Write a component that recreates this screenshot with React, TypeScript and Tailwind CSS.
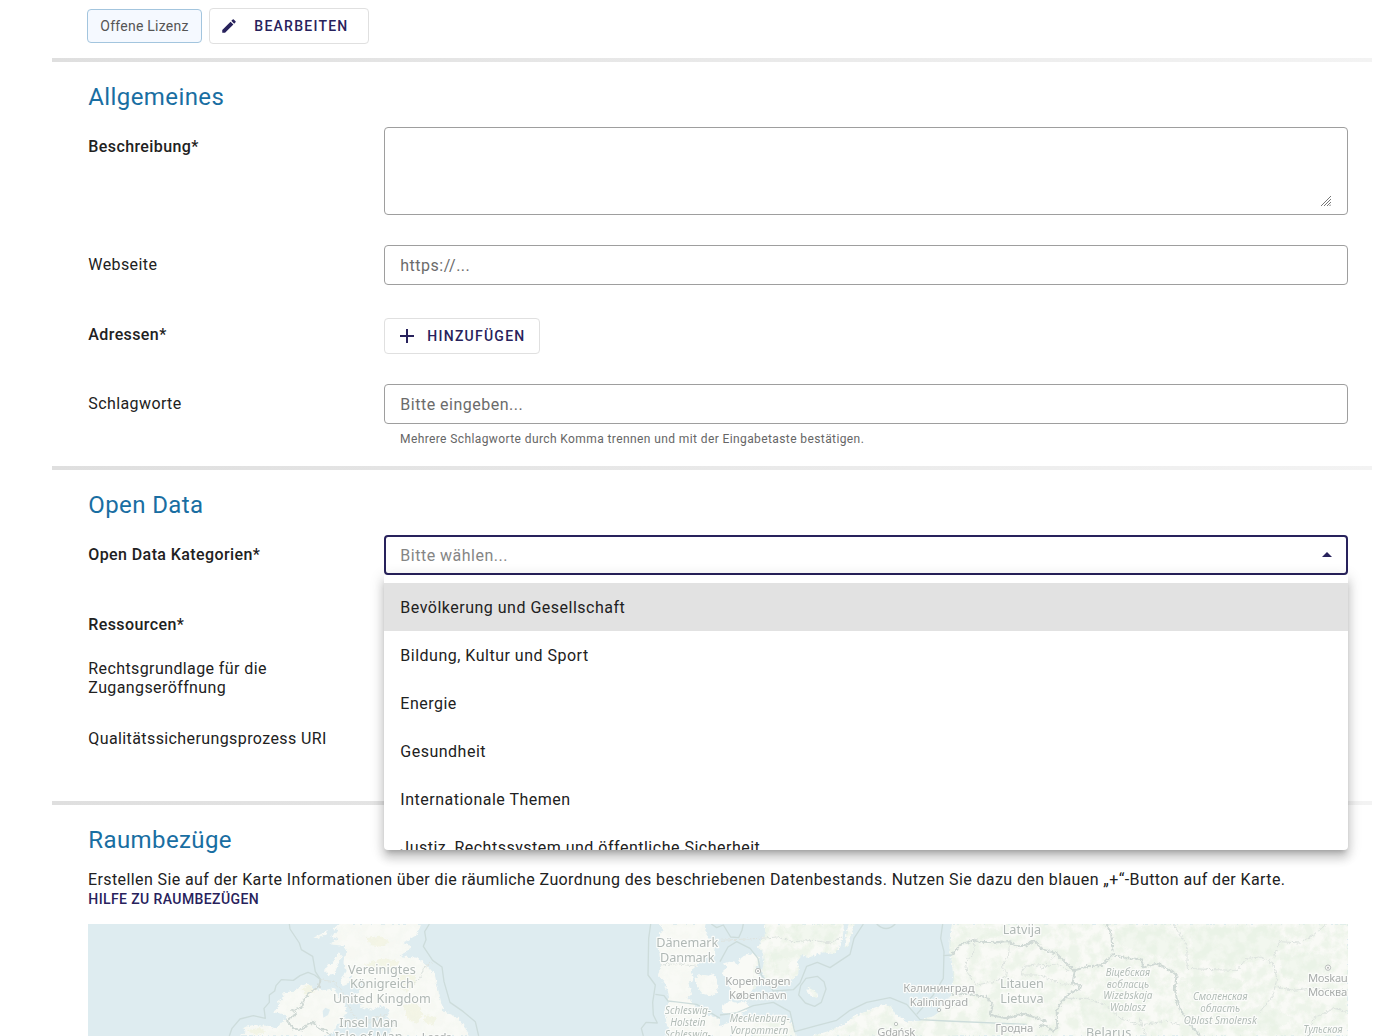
import React from "react";

const LAND = [
  // Scotland and England
  "M776 27 L760 42 L778 46 L750 66 L776 70 L748 88 L790 92 L800 104 L790 140 L800 168 L782 196 L788 214 L806 206 L812 178 L826 206 L850 196 L858 208 L838 226 L828 248 L850 262 L838 278 L880 284 L900 272 L930 284 L922 306 L936 330 L928 363 L1166 363 L1152 330 L1130 306 L1090 288 L1078 240 L1064 178 L1040 150 L1010 128 L960 124 L996 96 L970 84 L1010 60 L1024 27 Z",
  "M776 112 L786 122 L774 146 L764 178 L744 178 L732 166 L744 148 L758 146 Z",
  "M700 68 L722 58 L740 48 L738 58 L716 70 Z",
  // Ireland
  "M480 363 L500 346 L486 338 L520 330 L560 332 L590 340 L606 322 L624 304 L606 296 L578 292 L598 276 L594 260 L612 246 L606 236 L640 228 L662 212 L684 206 L700 222 L730 226 L762 220 L778 250 L796 270 L800 290 L784 322 L770 330 L764 350 L740 363 Z",
  // Jutland
  "M1738 27 L1750 42 L1740 56 L1736 96 L1742 150 L1734 180 L1752 200 L1766 238 L1764 262 L1754 284 L1760 330 L1780 363 L1920 363 L1920 310 L1880 300 L1850 284 L1838 262 L1822 250 L1836 236 L1826 210 L1838 190 L1832 168 L1852 150 L1870 120 L1900 134 L1904 100 L1896 80 L1880 60 L1874 40 L1878 27 Z",
  "M1846 188 L1860 178 L1884 182 L1902 176 L1912 196 L1912 230 L1896 244 L1868 236 L1852 216 Z",
  // Zealand and islands
  "M1936 190 L1926 170 L1940 158 L1930 146 L1956 138 L1974 150 L1984 126 L2010 116 L2034 124 L2040 142 L2026 160 L2038 184 L2026 220 L2004 236 L1990 254 L1964 244 L1950 222 Z",
  "M1926 270 L1950 258 L1974 264 L1998 258 L2008 276 L1990 290 L1980 316 L1960 296 L1930 294 Z",
  // Scania
  "M2054 27 L2056 56 L2046 72 L2034 98 L2048 110 L2052 140 L2046 168 L2060 200 L2088 206 L2124 204 L2154 180 L2156 160 L2150 142 L2168 118 L2184 128 L2230 112 L2262 118 L2276 100 L2288 70 L2292 27 Z",
  "M2306 27 L2324 27 L2316 58 L2304 94 L2294 100 L2298 60 Z",
  "M2184 214 L2208 230 L2212 248 L2194 244 L2182 234 Z",
  // German coast
  "M1920 363 L1920 334 L1960 318 L2010 322 L2054 306 L2100 300 L2126 318 L2142 334 L2150 363 Z",
  // Poland, the Baltics and the east
  "M2194 363 L2240 350 L2290 330 L2312 310 L2360 288 L2408 270 L2432 272 L2446 296 L2480 320 L2520 318 L2550 304 L2574 278 L2604 262 L2616 230 L2620 190 L2616 140 L2608 110 L2610 60 L2616 27 L3804 27 L3804 363 Z",
];

const FOREST = [
  "M2110 40 L2160 30 L2284 32 L2270 90 L2220 70 L2150 84 Z",
  "M2070 110 L2130 130 L2124 180 L2090 160 Z",
  "M2640 36 L2740 40 L2780 60 L2720 74 L2660 66 Z",
  "M3100 40 L3220 32 L3300 70 L3290 130 L3200 120 L3120 90 Z",
  "M3330 40 L3560 34 L3640 80 L3560 130 L3460 150 L3340 130 Z",
  "M3300 190 L3420 180 L3500 200 L3470 226 L3350 220 Z",
  "M3000 260 L3100 250 L3160 300 L3100 340 L3010 330 Z",
  "M3600 130 L3700 110 L3760 140 L3700 200 L3610 190 Z",
  "M2690 280 L2760 260 L2800 300 L2760 340 L2700 330 Z",
  "M3460 290 L3560 270 L3640 310 L3580 350 L3470 345 Z",
];

const FARMLAND = [
  "M860 70 L900 62 L930 80 L910 96 L870 90 Z",
  "M850 150 L910 128 L960 140 L940 170 L880 168 Z",
  "M960 180 L1000 170 L1010 200 L980 230 L950 214 Z",
  "M970 270 L1010 262 L1030 300 L1010 326 L980 310 Z",
  "M664 222 L690 210 L704 230 L680 244 Z",
  "M500 346 L540 338 L560 352 L530 360 Z",
  "M1036 300 L1070 306 L1060 330 L1030 320 Z",
];

const SEA_BORDERS = [
  "M628 27 L630 42 L658 84 L664 104 L698 124 L706 170 L722 194 L704 180 L684 172 L660 182 L640 196 L604 194 L588 212 L584 228 L568 240 L568 262 L552 280 L556 310 L520 302 L480 312 L456 340 L448 363",
  "M1048 27 L1034 50 L1038 74 L1030 94 L1058 136 L1086 156 L1092 200 L1110 262 L1150 290 L1186 320 L1196 363",
  "M1712 27 L1706 70 L1704 180 L1726 210 L1718 262 L1720 300 L1732 324 L1698 322 L1684 340 L1690 363",
  "M1726 238 L1752 242 L1764 258 L1850 268 L1890 292 L1920 310",
  "M1894 27 L1910 38 L1930 30 L1952 66 L1976 68 L1986 46 L1990 27",
  "M1920 140 L1944 96 L1970 80 L2010 100 L2034 130 L2044 180 L2080 228 L2140 224 L2160 204 L2180 154 L2212 142 L2250 158 L2310 118 L2322 70 L2350 27",
  "M2178 190 L2212 184 L2232 200 L2238 222 L2224 262 L2204 274 L2176 264 L2156 240 L2162 212 Z",
  "M1920 300 L1968 294 L2020 272 L2080 262 L2130 290 L2144 350 L2210 332 L2270 316 L2310 286 L2360 262 L2430 248 L2480 268 L2520 314 L2600 318 L2840 328",
  "M2390 27 Q2418 54 2446 27",
  "M2588 27 L2582 70 L2592 110 L2590 190 L2560 240 L2510 298",
  "M2590 122 L2616 120",
];

const LAND_BORDERS = [
  "M722 194 L716 216 L684 236 L668 262 L664 278 L636 288 L650 296 L620 316 L640 340 L664 346 L680 330 L700 320 L716 340 L736 345 L752 363",
  "M2616 120 L2640 90 L2684 74 L2700 80 L2750 82 L2786 78 L2810 94 L2834 92 L2862 78 L2890 104 L2930 116 L2964 150 L2984 166 L3026 154 L3066 150 L3100 118 L3140 130 L3184 132 L3190 158 L3230 146 L3260 160 L3290 180 L3284 220 L3292 262 L3304 290 L3340 340 L3360 363",
  "M3080 27 L3094 60 L3098 110",
  "M2984 166 L2978 204 L3004 210 L3000 222 L2974 232 L2944 260 L2930 290 L2932 340 L2918 348 L2902 334 L2880 330",
  "M2616 240 L2660 236 L2720 246 L2738 270 L2732 300 L2780 310 L2830 296 L2900 320",
];

const REGION_BORDERS = [
  "M1920 76 L2040 70 L2090 66 L2140 80 L2200 76 L2250 84 L2286 66",
  "M1740 150 L1790 146 L1850 154",
  "M2684 80 L2680 120 L2656 140 L2660 170 L2690 210 L2740 200 L2780 184 L2782 170 L2764 160 L2786 120 L2788 84",
  "M2926 122 L2896 148 L2830 154 L2824 180 L2880 180 L2940 206 L3000 210",
  "M3280 27 L3300 60 L3320 90 L3322 160 L3400 164 L3470 166 L3500 130 L3540 126 L3580 144 L3590 190 L3580 240 L3540 290",
  "M3580 130 L3600 80 L3660 84 L3700 60 L3740 27",
  "M3590 216 L3640 226 L3690 220 L3804 226",
  "M2880 160 L2930 146 L2970 170",
  "M2960 250 L3020 250 L3080 270 L3120 310 L3180 330 L3260 318 L3300 330",
  "M3200 363 L3184 330 L3180 310",
  "M3680 363 L3700 310 L3760 280 L3804 290",
  "M722 194 L760 200 L786 226 L800 262 L820 300 L850 330 L880 306 L920 302",
  "M850 334 L900 300 L950 332",
  "M1056 140 L1030 160 L1020 190 L1000 206",
];

type Label = { t: string; x: number; y: number; w: number; s: number; italic?: boolean; dark?: boolean };

const LABELS: Label[] = [
  { t: "Vereinigtes", x: 906, y: 175, w: 204, s: 38 },
  { t: "Königreich", x: 906, y: 219, w: 192, s: 38 },
  { t: "United Kingdom", x: 906, y: 264, w: 294, s: 38 },
  { t: "Insel Man", x: 866, y: 335, w: 176, s: 38 },
  { t: "Isle of Man", x: 866, y: 376, w: 204, s: 38 },
  { t: "Leeds", x: 1070, y: 376, w: 90, s: 34, dark: true },
  { t: "Dänemark", x: 1822, y: 96, w: 186, s: 38 },
  { t: "Danmark", x: 1822, y: 141, w: 164, s: 38 },
  { t: "Schleswig-", x: 1824, y: 297, w: 138, s: 30, italic: true },
  { t: "Holstein", x: 1824, y: 332, w: 106, s: 30, italic: true },
  { t: "Schleswig-", x: 1824, y: 367, w: 138, s: 30, italic: true },
  { t: "Kopenhagen", x: 2034, y: 210, w: 196, s: 34, dark: true },
  { t: "København", x: 2034, y: 252, w: 174, s: 34, dark: true },
  { t: "Mecklenburg-", x: 2039, y: 319, w: 180, s: 30, italic: true },
  { t: "Vorpommern", x: 2038, y: 355, w: 174, s: 30, italic: true },
  { t: "Калининград", x: 2577, y: 231, w: 214, s: 34, dark: true },
  { t: "Kaliningrad", x: 2577, y: 272, w: 176, s: 34, dark: true },
  { t: "Gdańsk", x: 2449, y: 362, w: 114, s: 34, dark: true },
  { t: "Latvija", x: 2826, y: 57, w: 116, s: 38 },
  { t: "Litauen", x: 2826, y: 219, w: 132, s: 38 },
  { t: "Lietuva", x: 2826, y: 264, w: 130, s: 38 },
  { t: "Гродна", x: 2803, y: 351, w: 114, s: 34, dark: true },
  { t: "Віцебская", x: 3144, y: 181, w: 134, s: 30, italic: true },
  { t: "вобласць", x: 3144, y: 217, w: 128, s: 30, italic: true },
  { t: "Wizebskaja", x: 3144, y: 252, w: 148, s: 30, italic: true },
  { t: "Woblasz", x: 3144, y: 288, w: 108, s: 30, italic: true },
  { t: "Belarus", x: 3086, y: 366, w: 136, s: 38 },
  { t: "Смоленская", x: 3421, y: 253, w: 164, s: 30, italic: true },
  { t: "область", x: 3421, y: 289, w: 120, s: 30, italic: true },
  { t: "Oblast Smolensk", x: 3421, y: 325, w: 220, s: 30, italic: true },
  { t: "Тульская", x: 3729, y: 353, w: 118, s: 30, italic: true },
  { t: "Moskau", x: 3744, y: 200, w: 120, s: 34, dark: true },
  { t: "Москва", x: 3743, y: 242, w: 118, s: 34, dark: true },
];

function MapView() {
  return (
    <svg className="block h-28 w-[1260px]" viewBox="24 27 3780 336" aria-label="Karte">
      <defs>
        <clipPath id="land">
          {LAND.map((d) => (
            <path key={d} d={d} />
          ))}
        </clipPath>
        <filter id="coast" x="0" y="0" width="100%" height="100%" colorInterpolationFilters="sRGB">
          <feTurbulence type="fractalNoise" baseFrequency="0.12" numOctaves={3} seed={4} />
          <feDisplacementMap in="SourceGraphic" scale={14} xChannelSelector="R" yChannelSelector="G" />
        </filter>
        <filter id="woods" x="0" y="0" width="100%" height="100%" colorInterpolationFilters="sRGB">
          <feTurbulence type="fractalNoise" baseFrequency="0.03" numOctaves={5} seed={9} />
          <feColorMatrix values="0 0 0 0 0.905  0 0 0 0 0.945  0 0 0 0 0.89  3.5 0 0 0 -1.3" />
        </filter>
      </defs>
      <rect x="24" y="27" width="3780" height="336" fill="#deecf0" />
      <g filter="url(#coast)">
        {LAND.map((d) => (
          <path key={d} d={d} fill="#f9faf6" />
        ))}
        {FARMLAND.map((d) => (
          <path key={d} d={d} fill="#f4f5e6" />
        ))}
      </g>
      <g clipPath="url(#land)">
        <rect x="2020" y="27" width="1784" height="336" filter="url(#woods)" opacity="0.65" />
        <rect x="440" y="27" width="1480" height="336" filter="url(#woods)" opacity="0.15" />
        <g filter="url(#coast)">
          {FOREST.map((d) => (
            <path key={d} d={d} fill="#e6f0e1" opacity="0.35" />
          ))}
        </g>
      </g>
      <path d="M728 288 L736 278 L750 284 L744 300 L730 308 Z" fill="#deecf0" />
      <path d="M2540 308 L2572 276 L2586 284 L2560 304 Z" fill="#deecf0" />
      <g fill="none" strokeLinejoin="round">
        {SEA_BORDERS.map((d) => (
          <path key={d} d={d} stroke="#cddcdb" strokeWidth="4" />
        ))}
        <g filter="url(#coast)">
          {LAND_BORDERS.map((d) => (
            <path key={d} d={d} stroke="#d0d9d5" strokeWidth="6" />
          ))}
          {REGION_BORDERS.map((d) => (
            <path key={d} d={d} stroke="#dde3df" strokeWidth="3" />
          ))}
        </g>
      </g>
      {[
        [2034, 168],
        [3744, 158],
      ].map(([cx, cy]) => (
        <g key={cx}>
          <circle cx={cx} cy={cy} r="8" fill="#fbfbf9" stroke="#b0b5b3" strokeWidth="2.5" />
          <circle cx={cx} cy={cy} r="3" fill="#b0b5b3" />
        </g>
      ))}
      {[
        [2577, 285],
        [2448, 327],
      ].map(([cx, cy]) => (
        <circle key={cx} cx={cx} cy={cy} r="5" fill="#fbfbf9" stroke="#b5bab8" strokeWidth="2.5" />
      ))}
      <g
        className="font-['Noto_Sans']"
        textAnchor="middle"
        stroke="#fbfcfa"
        strokeWidth="7"
        strokeLinejoin="round"
        paintOrder="stroke"
      >
        {LABELS.map((l) => (
          <text
            key={l.t + l.y}
            x={l.x}
            y={l.y + 1}
            fontSize={l.s}
            textLength={l.w}
            fontStyle={l.italic ? "italic" : "normal"}
            fill={l.dark ? "#a8acab" : l.italic ? "#b2bcb7" : "#b0b8b5"}
          >
            {l.t}
          </text>
        ))}
      </g>
    </svg>
  );
}

function Divider() {
  return <div className="h-1 w-[1320px] shrink-0 bg-linear-to-r from-[#dfdfdf] to-[#f3f3f3]" />;
}

function SectionTitle({ children }: { children: React.ReactNode }) {
  return (
    <h2 className="mt-[19px] h-8 pl-[36.3px] text-2xl leading-8 tracking-[0.4px] text-[#196ea2]">{children}</h2>
  );
}

type RowProps = { label: React.ReactNode; required?: boolean; className: string; children?: React.ReactNode };

function Row({ label, required, className, children }: RowProps) {
  return (
    <div className={"flex w-[1296px] items-start pl-9 " + className}>
      <div
        className={
          "w-[296px] shrink-0 pt-2.5 pl-[0.3px] leading-[19px] tracking-[0.4px] " + (required ? "font-medium" : "")
        }
      >
        {label}
      </div>
      <div className="grow">{children}</div>
    </div>
  );
}

const CATEGORIES = [
  "Bevölkerung und Gesellschaft",
  "Bildung, Kultur und Sport",
  "Energie",
  "Gesundheit",
  "Internationale Themen",
  "Justiz, Rechtssystem und öffentliche Sicherheit",
];

const FIELD = "flex h-10 items-center rounded border border-[#9e9e9e] px-[15.3px] pt-px text-[#6b6b6b]";
const BUTTON =
  "flex h-9 items-center rounded border border-[#e0e0e0] text-sm font-medium tracking-[1.25px] text-[#28225c]";

export default function App() {
  return (
    <div className="flex h-[1036px] w-[1400px] flex-col overflow-hidden bg-white pl-[52px] font-[Roboto,sans-serif] text-base tracking-[0.5px] text-[#212121]">
      <div className="flex h-[58px] shrink-0 items-start gap-[7px] pt-2 pl-[35px]">
        <div className="mt-px flex h-[34px] w-[115px] items-center justify-center rounded border border-[#a3c5de] bg-[#f5f9ff] text-sm tracking-[0.25px] text-[#555]">
          Offene Lizenz
        </div>
        <button className={BUTTON + " w-40 pl-2.5"}>
          <svg className="mr-[16.3px] size-[18px]" viewBox="0 0 24 24" fill="currentColor">
            <path d="M3 17.25V21h3.75L17.81 9.94l-3.75-3.75L3 17.25zM20.71 7.04a1 1 0 0 0 0-1.41l-2.34-2.34a1 1 0 0 0-1.41 0l-1.83 1.83 3.75 3.75 1.83-1.83z" />
          </svg>
          BEARBEITEN
        </button>
      </div>

      <Divider />
      <section className="h-[404px] shrink-0">
        <SectionTitle>Allgemeines</SectionTitle>
        <Row label="Beschreibung*" required className="mt-3.5 h-[88px]">
          <div className="flex h-[88px] items-end justify-end rounded border border-[#9e9e9e] pr-4 pb-2">
            <svg className="size-[11px]" viewBox="0 0 11 11" stroke="#777" strokeWidth="1">
              <path d="M1 11 L11 1 M4 11 L11 4 M7 11 L11 7 M9.5 11 L11 9.5" />
            </svg>
          </div>
        </Row>
        <Row label="Webseite" className="mt-[30px] h-10">
          <div className={FIELD}>https://...</div>
        </Row>
        <Row label="Adressen*" required className="mt-[30px] h-[39px]">
          <button className={BUTTON + " mt-[3px] w-[156px] pl-[10.3px]"}>
            <svg className="mr-2 size-6" viewBox="0 0 24 24" fill="currentColor">
              <path d="M19 13h-6v6h-2v-6H5v-2h6V5h2v6h6v2z" />
            </svg>
            HINZUFÜGEN
          </button>
        </Row>
        <Row label="Schlagworte" className="mt-[30px] h-[62px]">
          <div className={FIELD}>Bitte eingeben...</div>
          <div className="mt-[7px] pl-4 text-xs leading-4 tracking-[0.4px] text-[#666]">
            Mehrere Schlagworte durch Komma trennen und mit der Eingabetaste bestätigen.
          </div>
        </Row>
      </section>

      <Divider />
      <section className="h-[331px] shrink-0">
        <SectionTitle>Open Data</SectionTitle>
        <Row label="Open Data Kategorien*" required className="mt-3.5 h-10">
          <div className="relative">
            <div className="flex h-10 items-center justify-between rounded border-2 border-[#28225c] pt-px pr-3.5 pl-[14.3px] text-[#858585]">
              Bitte wählen...
              <svg className="mb-[3px] h-[5px] w-2.5" viewBox="0 0 10 5" fill="#28225c">
                <path d="M0 5 L5 0 L10 5 Z" />
              </svg>
            </div>
            <div className="absolute top-10 left-0 z-10 h-[275px] w-full overflow-hidden rounded-b bg-white pt-2 shadow-[0_5px_5px_-3px_rgba(0,0,0,0.2),0_8px_10px_1px_rgba(0,0,0,0.14),0_3px_14px_2px_rgba(0,0,0,0.12)]">
              {CATEGORIES.map((name, i) => (
                <div
                  key={name}
                  className={"flex h-12 items-center pt-0.5 pr-4 pl-[16.3px] " + (i === 0 ? "bg-[#e2e2e2]" : "")}
                >
                  {name}
                </div>
              ))}
            </div>
          </div>
        </Row>
        <Row label="Ressourcen*" required className="mt-[30px] h-[39px]" />
        <Row label={<>Rechtsgrundlage für die<br />Zugangseröffnung</>} className="mt-[5px] h-12" />
        <Row label="Qualitätssicherungsprozess URI" className="mt-[22px] h-10" />
      </section>

      <Divider />
      <section className="shrink-0">
        <SectionTitle>Raumbezüge</SectionTitle>
        <div className="mt-3.5 pl-9 tracking-[0.4px]">
          <p className="h-5 leading-[19px]">
            Erstellen Sie auf der Karte Informationen über die räumliche Zuordnung des beschriebenen Datenbestands.
            Nutzen Sie dazu den blauen „+“-Button auf der Karte.
          </p>
          <a className="block h-[34px] pl-[0.3px] text-sm leading-[18px] font-medium text-[#28225c]">
            HILFE ZU RAUMBEZÜGEN
          </a>
          <MapView />
        </div>
      </section>
    </div>
  );
}
